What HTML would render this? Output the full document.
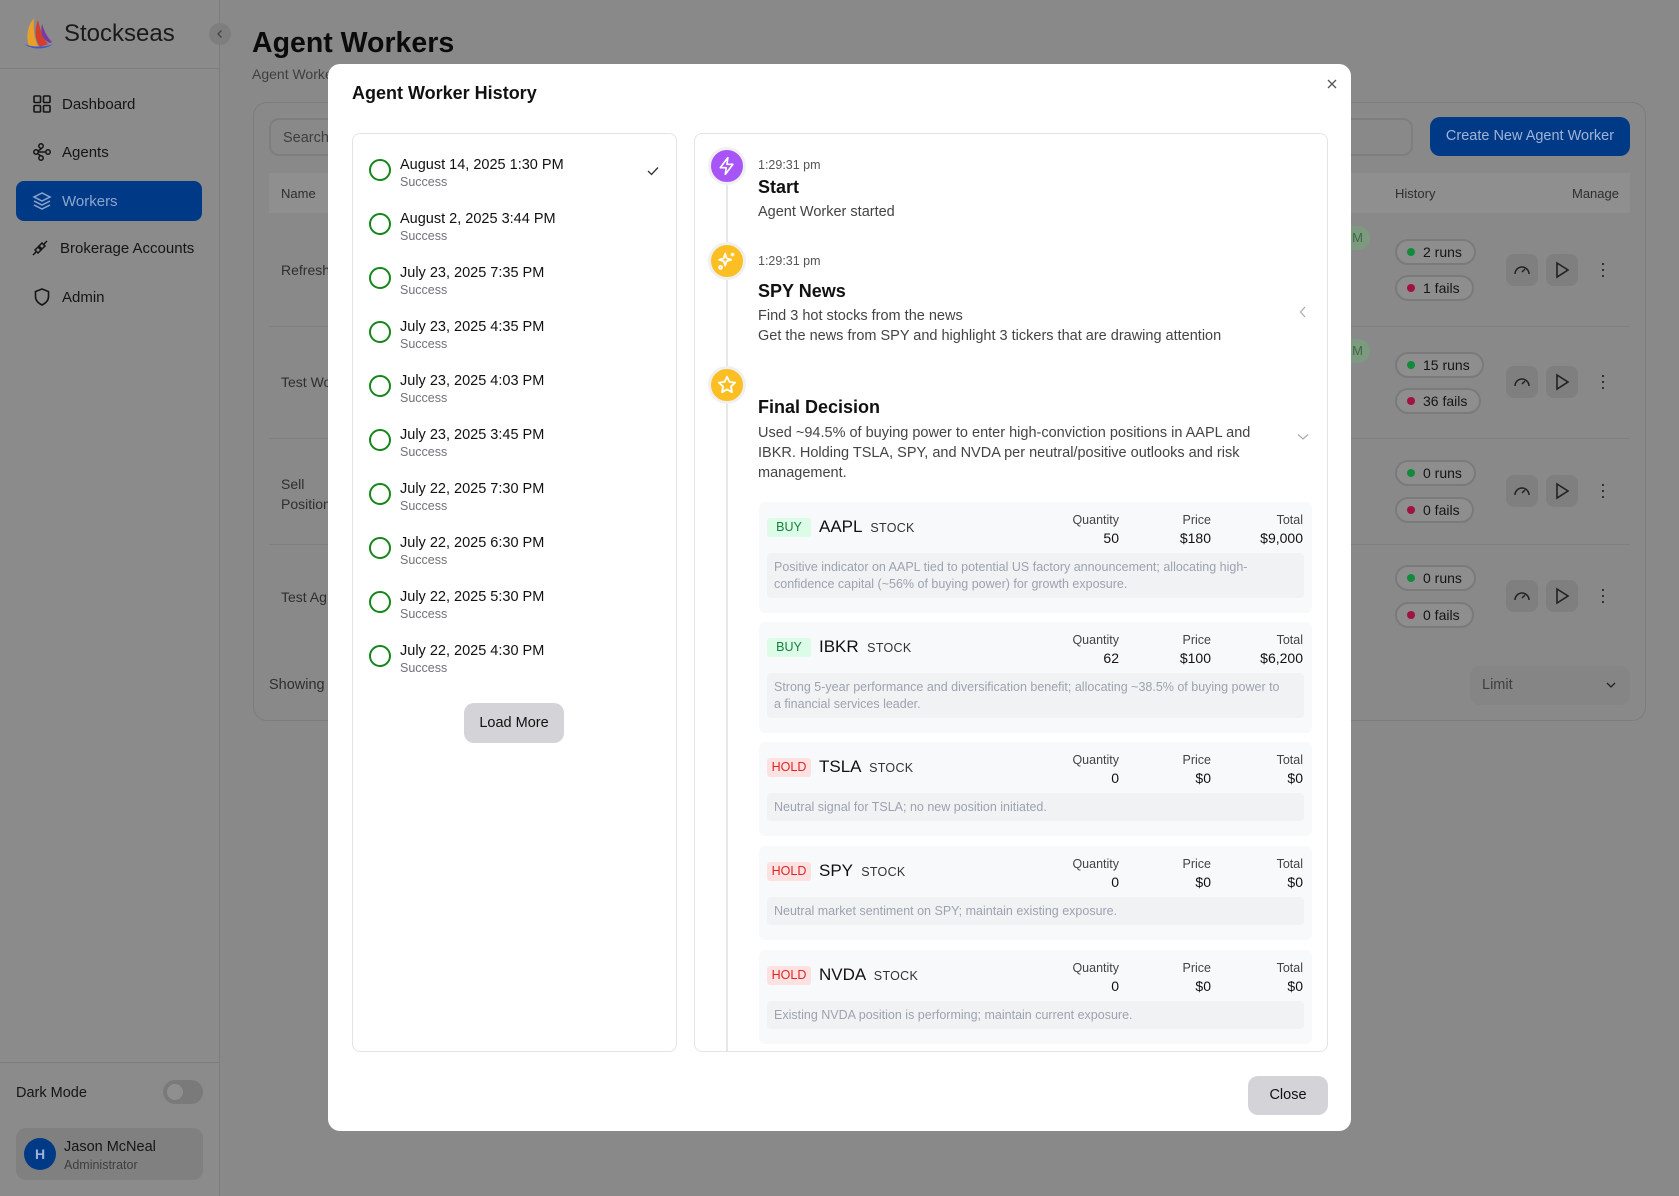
<!DOCTYPE html>
<html><head><meta charset="utf-8"><style>
*{box-sizing:border-box;margin:0;padding:0}
body{width:1679px;height:1196px;overflow:hidden;font-family:"Liberation Sans",sans-serif;background:#898989;position:relative;color:#111}
.a{position:absolute}
.sb{left:0;top:0;width:220px;height:1196px;background:#8b8b8b;border-right:1px solid #7d7d7d}
.nav{left:32px;font-size:15px;color:#151515;display:flex;align-items:center;gap:10px;height:24px}
.nav svg{width:20px;height:20px}
.pill{height:26px;border:2px solid #7a7a7a;border-radius:14px;font-size:14px;color:#151515;display:flex;align-items:center;padding:0 12px 0 10px;gap:8px;background:#8e8e8e}
.dot{width:8px;height:8px;border-radius:50%}
.mb{width:32px;height:32px;border-radius:8px;background:#7f7f7f;display:flex;align-items:center;justify-content:center}
.modal{left:328px;top:64px;width:1023px;height:1067px;background:#fff;border-radius:12px}
.lp{left:24px;top:69px;width:325px;height:919px;border:1px solid #e4e4e7;border-radius:8px}
.it{left:16px;display:flex;gap:9px}
.ring{width:22px;height:22px;border:2.2px solid #15871a;border-radius:50%;margin-top:2px}
.d{font-size:14.5px;color:#111;line-height:17px}
.s{font-size:12.5px;color:#71717a;line-height:17px}
.rp{left:366px;top:69px;width:634px;height:919px;border:1px solid #e4e4e7;border-radius:8px;overflow:hidden}
.tm{font-size:12.5px;color:#555}
.h{font-size:18px;font-weight:bold;color:#111}
.tx{font-size:14.5px;color:#444;line-height:20px}
.ic{width:38px;height:38px;border-radius:50%;border:3px solid #f0f0f0;display:flex;align-items:center;justify-content:center}
.card{left:64px;width:553px;background:#f8f9fb;border-radius:6px}
.bd{left:8px;top:16px;height:19px;width:44px;text-align:center;border-radius:3px;font-size:12.5px;line-height:19px}
.buy{background:#dcfce7;color:#15803d}.hold{background:#fee2e2;color:#dc2626}
.tk{top:15px;font-size:17px;color:#111}
.st{font-size:12.5px;color:#333;letter-spacing:.3px}
.col{top:9px;text-align:right;font-size:12.5px;line-height:18px;color:#444}
.col b{display:block;font-weight:normal;font-size:14px;color:#111}
.rs{left:8px;right:8px;border-radius:4px;background:#f1f2f4;font-size:12.5px;color:#9ca3af;line-height:17px;padding:6px 16px 6px 7px}
</style></head><body>
<div class="a sb"></div>
<div class="a" style="left:0;top:68px;width:220px;height:1px;background:#7d7d7d"></div>
<svg class="a" style="left:20px;top:16px" width="36" height="36" viewBox="0 0 36 36"><path d="M14 2 C6 12 6 24 10 32 L18 30 C14 22 13 12 14 2Z" fill="#e8a02a"/><path d="M18 4 C14 14 15 24 20 31 L28 28 C22 22 20 12 18 4Z" fill="#d0402c"/><path d="M4 28 C12 34 24 34 34 28 C26 31 14 32 4 28Z" fill="#3a5bd0"/><path d="M22 8 C20 16 22 24 30 27 L32 26 C26 20 24 14 22 8Z" fill="#7a3aa0"/></svg>
<div class="a" style="left:64px;top:20px;font-size:24px;color:#1a1a1a">Stockseas</div>
<div class="a" style="left:209px;top:23px;width:22px;height:22px;border-radius:50%;background:#7e7e7e;display:flex;align-items:center;justify-content:center"><svg width="10" height="10" viewBox="0 0 10 10"><path d="M6.5 1.5 3 5l3.5 3.5" stroke="#444" stroke-width="1.3" fill="none"/></svg></div>
<div class="a nav" style="top:92px"><svg viewBox="0 0 20 20" fill="none" stroke="#151515" stroke-width="1.6"><rect x="2" y="2" width="6.5" height="6.5" rx="1"/><rect x="11.5" y="2" width="6.5" height="6.5" rx="1"/><rect x="2" y="11.5" width="6.5" height="6.5" rx="1"/><rect x="11.5" y="11.5" width="6.5" height="6.5" rx="1"/></svg>Dashboard</div>
<div class="a nav" style="top:140px"><svg viewBox="0 0 20 20" fill="none" stroke="#151515" stroke-width="1.5"><circle cx="9" cy="4" r="2.2"/><circle cx="4" cy="10" r="2.2"/><circle cx="16" cy="10" r="2.2"/><circle cx="9" cy="16" r="2.2"/><path d="M6 10h8M9 6v1l-3 2M9 14l-3-2"/></svg>Agents</div>
<div class="a" style="left:16px;top:181px;width:186px;height:40px;border-radius:8px;background:#003a86"></div>
<div class="a nav" style="top:189px;color:#8ea5cc"><svg viewBox="0 0 20 20" fill="none" stroke="#8ea5cc" stroke-width="1.5"><path d="M10 2 2 6l8 4 8-4z"/><path d="M2 10l8 4 8-4M2 14l8 4 8-4"/></svg>Workers</div>
<div class="a nav" style="top:236px;left:30px"><svg viewBox="0 0 20 20" fill="none" stroke="#151515" stroke-width="1.5"><path d="M3 17l3-3M14 6l3-3M5 12l3 3 3-3-3-3zM9 8l3 3 3-3-3-3z"/></svg>Brokerage Accounts</div>
<div class="a nav" style="top:285px"><svg viewBox="0 0 20 20" fill="none" stroke="#151515" stroke-width="1.6"><path d="M10 2 3.5 4.5v5c0 4 3 6.8 6.5 8.5 3.5-1.7 6.5-4.5 6.5-8.5v-5z"/></svg>Admin</div>
<div class="a" style="left:0;top:1062px;width:220px;height:1px;background:#7d7d7d"></div>
<div class="a" style="left:16px;top:1085px;font-size:14.5px;color:#151515">Dark Mode</div>
<div class="a" style="left:163px;top:1080px;width:40px;height:24px;border-radius:12px;background:#7a7a7a"><div style="margin:4px;width:16px;height:16px;border-radius:50%;background:#8f8f8f"></div></div>
<div class="a" style="left:16px;top:1128px;width:187px;height:52px;border-radius:10px;background:#808080"></div>
<div class="a" style="left:24px;top:1138px;width:32px;height:32px;border-radius:50%;background:#003a86;color:#9fb3d6;font-size:14px;font-weight:bold;text-align:center;line-height:32px">H</div>
<div class="a" style="left:64px;top:1139px;font-size:14.5px;color:#151515">Jason McNeal</div>
<div class="a" style="left:64px;top:1158px;font-size:12.5px;color:#3e3e3e">Administrator</div>

<div class="a" style="left:252px;top:27px;font-size:28.5px;font-weight:bold;color:#0b0b0b">Agent Workers</div>
<div class="a" style="left:252px;top:66px;font-size:14px;color:#3e3e3e">Agent Workers</div>
<div class="a" style="left:253px;top:102px;width:1393px;height:619px;border:1px solid #7c7c7c;border-radius:14px"></div>
<div class="a" style="left:269px;top:118px;width:1144px;height:38px;border:2px solid #7e7e7e;border-radius:10px;font-size:14.5px;color:#3e3e3e;padding:10px 12px">Search</div>
<div class="a" style="left:1430px;top:117px;width:200px;height:39px;border-radius:10px;background:#003a86;color:#9fb3d6;font-size:14.5px;text-align:center;line-height:39px">Create New Agent Worker</div>
<div class="a" style="left:269px;top:173px;width:1361px;height:40px;background:#8f8f8f"></div>
<div class="a" style="left:281px;top:186px;font-size:13px;color:#2e2e2e">Name</div>
<div class="a" style="left:1395px;top:186px;font-size:13px;color:#2e2e2e">History</div>
<div class="a" style="left:1572px;top:186px;font-size:13px;color:#2e2e2e">Manage</div>
<div class="a" style="left:281px;top:262px;font-size:14px;color:#2e2e2e">Refresh</div>
<div class="a" style="left:281px;top:374px;font-size:14px;color:#2e2e2e">Test Wo</div>
<div class="a" style="left:281px;top:474px;font-size:14px;color:#2e2e2e;line-height:20px">Sell<br>Position</div>
<div class="a" style="left:281px;top:589px;font-size:14px;color:#2e2e2e">Test Ag</div>
<div class="a" style="left:269px;top:326px;width:1361px;height:1px;background:#7f7f7f"></div>
<div class="a" style="left:269px;top:438px;width:1361px;height:1px;background:#7f7f7f"></div>
<div class="a" style="left:269px;top:544px;width:1361px;height:1px;background:#7f7f7f"></div>
<div class="a" style="left:269px;top:677px;font-size:14.5px;color:#2e2e2e">Showing</div>
<div class="a" style="left:1340px;top:226px;width:30px;height:24px;border-radius:12px;background:#7d9a80;color:#3c6a40;font-size:13px;line-height:24px;text-align:right;padding-right:7px">M</div>
<div class="a" style="left:1340px;top:339px;width:30px;height:24px;border-radius:12px;background:#7d9a80;color:#3c6a40;font-size:13px;line-height:24px;text-align:right;padding-right:7px">M</div>

<div class="a pill" style="left:1395px;top:239px"><span class="dot" style="background:#118a3a"></span>2 runs</div>
<div class="a pill" style="left:1395px;top:275px"><span class="dot" style="background:#a0123f"></span>1 fails</div>
<div class="a pill" style="left:1395px;top:352px"><span class="dot" style="background:#118a3a"></span>15 runs</div>
<div class="a pill" style="left:1395px;top:388px"><span class="dot" style="background:#a0123f"></span>36 fails</div>
<div class="a pill" style="left:1395px;top:460px"><span class="dot" style="background:#118a3a"></span>0 runs</div>
<div class="a pill" style="left:1395px;top:497px"><span class="dot" style="background:#a0123f"></span>0 fails</div>
<div class="a pill" style="left:1395px;top:565px"><span class="dot" style="background:#118a3a"></span>0 runs</div>
<div class="a pill" style="left:1395px;top:602px"><span class="dot" style="background:#a0123f"></span>0 fails</div>

<div class="a" style="left:1506px;top:254px"><div class="mb"><svg width="20" height="20" viewBox="0 0 20 20" fill="none" stroke="#222" stroke-width="1.5"><path d="M3 14a7 7 0 1 1 14 0"/><path d="M10 12l3-3"/></svg></div></div>
<div class="a" style="left:1546px;top:254px"><div class="mb"><svg width="20" height="20" viewBox="0 0 20 20" fill="none" stroke="#222" stroke-width="1.6"><path d="M5 3l11 7-11 7z"/></svg></div></div>
<div class="a" style="left:1600px;top:260px;font-size:18px;color:#222;line-height:6px">·<br>·<br>·</div>
<div class="a" style="left:1506px;top:366px"><div class="mb"><svg width="20" height="20" viewBox="0 0 20 20" fill="none" stroke="#222" stroke-width="1.5"><path d="M3 14a7 7 0 1 1 14 0"/><path d="M10 12l3-3"/></svg></div></div>
<div class="a" style="left:1546px;top:366px"><div class="mb"><svg width="20" height="20" viewBox="0 0 20 20" fill="none" stroke="#222" stroke-width="1.6"><path d="M5 3l11 7-11 7z"/></svg></div></div>
<div class="a" style="left:1600px;top:372px;font-size:18px;color:#222;line-height:6px">·<br>·<br>·</div>
<div class="a" style="left:1506px;top:475px"><div class="mb"><svg width="20" height="20" viewBox="0 0 20 20" fill="none" stroke="#222" stroke-width="1.5"><path d="M3 14a7 7 0 1 1 14 0"/><path d="M10 12l3-3"/></svg></div></div>
<div class="a" style="left:1546px;top:475px"><div class="mb"><svg width="20" height="20" viewBox="0 0 20 20" fill="none" stroke="#222" stroke-width="1.6"><path d="M5 3l11 7-11 7z"/></svg></div></div>
<div class="a" style="left:1600px;top:481px;font-size:18px;color:#222;line-height:6px">·<br>·<br>·</div>
<div class="a" style="left:1506px;top:580px"><div class="mb"><svg width="20" height="20" viewBox="0 0 20 20" fill="none" stroke="#222" stroke-width="1.5"><path d="M3 14a7 7 0 1 1 14 0"/><path d="M10 12l3-3"/></svg></div></div>
<div class="a" style="left:1546px;top:580px"><div class="mb"><svg width="20" height="20" viewBox="0 0 20 20" fill="none" stroke="#222" stroke-width="1.6"><path d="M5 3l11 7-11 7z"/></svg></div></div>
<div class="a" style="left:1600px;top:586px;font-size:18px;color:#222;line-height:6px">·<br>·<br>·</div>
<div class="a" style="left:1470px;top:666px;width:160px;height:39px;border-radius:10px;background:#858585;font-size:14.5px;color:#3e3e3e;padding:11px 12px">Limit<svg style="position:absolute;right:14px;top:15px" width="10" height="8" viewBox="0 0 10 8"><path d="M1 2l4 4 4-4" stroke="#222" stroke-width="1.3" fill="none"/></svg></div>

<div class="a modal">
<div class="a" style="left:24px;top:19px;font-size:18px;font-weight:bold;color:#111">Agent Worker History</div>
<svg class="a" style="left:998px;top:14px" width="12" height="12" viewBox="0 0 12 12"><path d="M2 2l8 8M10 2l-8 8" stroke="#555" stroke-width="1.3"/></svg>
<div class="a lp">
<div class="a it" style="top:23px"><div class="ring"></div><div><div class="d">August 14, 2025 1:30 PM</div><div class="s">Success</div></div></div>
<svg class="a" style="left:294px;top:32px" width="12" height="10" viewBox="0 0 12 10"><path d="M1 5l3.5 3.5L11 1.5" stroke="#333" stroke-width="1.3" fill="none"/></svg>
<div class="a it" style="top:77px"><div class="ring"></div><div><div class="d">August 2, 2025 3:44 PM</div><div class="s">Success</div></div></div>
<div class="a it" style="top:131px"><div class="ring"></div><div><div class="d">July 23, 2025 7:35 PM</div><div class="s">Success</div></div></div>
<div class="a it" style="top:185px"><div class="ring"></div><div><div class="d">July 23, 2025 4:35 PM</div><div class="s">Success</div></div></div>
<div class="a it" style="top:239px"><div class="ring"></div><div><div class="d">July 23, 2025 4:03 PM</div><div class="s">Success</div></div></div>
<div class="a it" style="top:293px"><div class="ring"></div><div><div class="d">July 23, 2025 3:45 PM</div><div class="s">Success</div></div></div>
<div class="a it" style="top:347px"><div class="ring"></div><div><div class="d">July 22, 2025 7:30 PM</div><div class="s">Success</div></div></div>
<div class="a it" style="top:401px"><div class="ring"></div><div><div class="d">July 22, 2025 6:30 PM</div><div class="s">Success</div></div></div>
<div class="a it" style="top:455px"><div class="ring"></div><div><div class="d">July 22, 2025 5:30 PM</div><div class="s">Success</div></div></div>
<div class="a it" style="top:509px"><div class="ring"></div><div><div class="d">July 22, 2025 4:30 PM</div><div class="s">Success</div></div></div>
<div class="a" style="left:111px;top:569px;width:100px;height:40px;border-radius:10px;background:#d4d4d8;font-size:14.5px;color:#111;text-align:center;line-height:40px">Load More</div>
</div>
<div class="a rp">
<div class="a" style="left:31px;top:30px;width:2px;height:900px;background:#e5e7eb"></div>
<div class="a ic" style="left:13px;top:13px;background:#a855f7"><svg width="20" height="20" viewBox="0 0 24 24" fill="none" stroke="#fff" stroke-width="2" stroke-linejoin="round"><path d="M13 2 4 14h7l-1 8 9-12h-7z"/></svg></div>
<div class="a tm" style="left:63px;top:24px">1:29:31 pm</div>
<div class="a h" style="left:63px;top:43px">Start</div>
<div class="a tx" style="left:63px;top:68px">Agent Worker started</div>
<div class="a ic" style="left:13px;top:108px;background:#fbbf24"><svg width="22" height="22" viewBox="0 0 24 24" fill="none" stroke="#fff" stroke-width="2" stroke-linejoin="round"><path d="M10 4l1.6 5 5 1.6-5 1.6L10 17l-1.6-4.8L3.5 10.6l4.9-1.6z"/><path d="M18 3v4M16 5h4"/><circle cx="5" cy="19" r="1.6"/></svg></div>
<div class="a tm" style="left:63px;top:120px">1:29:31 pm</div>
<div class="a h" style="left:63px;top:147px">SPY News</div>
<div class="a tx" style="left:63px;top:172px">Find 3 hot stocks from the news<br>Get the news from SPY and highlight 3 tickers that are drawing attention</div>
<svg class="a" style="left:604px;top:172px" width="8" height="12" viewBox="0 0 8 12"><path d="M6 1 1.5 6 6 11" stroke="#aaa" stroke-width="1.2" fill="none"/></svg>
<div class="a ic" style="left:13px;top:232px;background:#fbbf24"><svg width="22" height="22" viewBox="0 0 24 24" fill="none" stroke="#fff" stroke-width="2" stroke-linejoin="round"><path d="M12 3l2.7 5.6 6.1.8-4.5 4.3 1.1 6.1L12 16.9l-5.4 2.9 1.1-6.1-4.5-4.3 6.1-.8z"/></svg></div>
<div class="a h" style="left:63px;top:263px">Final Decision</div>
<div class="a tx" style="left:63px;top:289px;width:520px">Used ~94.5% of buying power to enter high-conviction positions in AAPL and IBKR. Holding TSLA, SPY, and NVDA per neutral/positive outlooks and risk management.</div>
<svg class="a" style="left:602px;top:299px" width="12" height="8" viewBox="0 0 12 8"><path d="M1 1.5 6 6l5-4.5" stroke="#aaa" stroke-width="1.2" fill="none"/></svg>

<div class="a card" style="top:368px;height:111px">
<div class="a bd buy">BUY</div><div class="a tk" style="left:60px">AAPL <span class="st">&nbsp;STOCK</span></div>
<div class="a col" style="right:193px">Quantity<b>50</b></div><div class="a col" style="right:101px">Price<b>$180</b></div><div class="a col" style="right:9px">Total<b>$9,000</b></div>
<div class="a rs" style="top:51px;height:45px">Positive indicator on AAPL tied to potential US factory announcement; allocating high-confidence capital (~56% of buying power) for growth exposure.</div></div>
<div class="a card" style="top:488px;height:111px">
<div class="a bd buy">BUY</div><div class="a tk" style="left:60px">IBKR <span class="st">&nbsp;STOCK</span></div>
<div class="a col" style="right:193px">Quantity<b>62</b></div><div class="a col" style="right:101px">Price<b>$100</b></div><div class="a col" style="right:9px">Total<b>$6,200</b></div>
<div class="a rs" style="top:51px;height:45px">Strong 5-year performance and diversification benefit; allocating ~38.5% of buying power to a financial services leader.</div></div>
<div class="a card" style="top:608px;height:94px">
<div class="a bd hold">HOLD</div><div class="a tk" style="left:60px">TSLA <span class="st">&nbsp;STOCK</span></div>
<div class="a col" style="right:193px">Quantity<b>0</b></div><div class="a col" style="right:101px">Price<b>$0</b></div><div class="a col" style="right:9px">Total<b>$0</b></div>
<div class="a rs" style="top:51px;height:28px">Neutral signal for TSLA; no new position initiated.</div></div>
<div class="a card" style="top:712px;height:94px">
<div class="a bd hold">HOLD</div><div class="a tk" style="left:60px">SPY <span class="st">&nbsp;STOCK</span></div>
<div class="a col" style="right:193px">Quantity<b>0</b></div><div class="a col" style="right:101px">Price<b>$0</b></div><div class="a col" style="right:9px">Total<b>$0</b></div>
<div class="a rs" style="top:51px;height:28px">Neutral market sentiment on SPY; maintain existing exposure.</div></div>
<div class="a card" style="top:816px;height:94px">
<div class="a bd hold">HOLD</div><div class="a tk" style="left:60px">NVDA <span class="st">&nbsp;STOCK</span></div>
<div class="a col" style="right:193px">Quantity<b>0</b></div><div class="a col" style="right:101px">Price<b>$0</b></div><div class="a col" style="right:9px">Total<b>$0</b></div>
<div class="a rs" style="top:51px;height:28px">Existing NVDA position is performing; maintain current exposure.</div></div>
</div>
<div class="a" style="left:920px;top:1012px;width:80px;height:39px;border-radius:10px;background:#d4d4d8;font-size:14.5px;color:#111;text-align:center;line-height:39px">Close</div>
</div>
</body></html>
